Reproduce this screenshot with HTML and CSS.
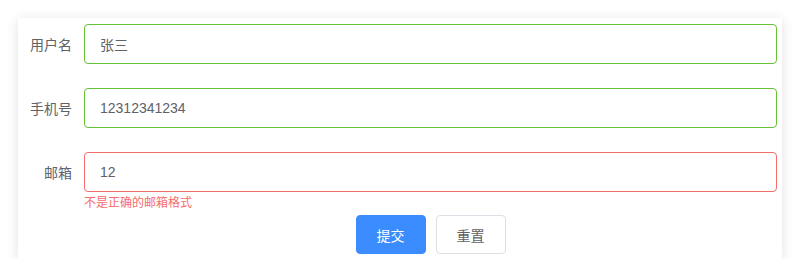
FILE: index.html
```html
<!DOCTYPE html>
<html lang="zh-CN">
<head>
    <meta charset="UTF-8">
    <meta name="viewport" content="width=device-width, initial-scale=1.0">
    <title>表单校验</title>
    <link rel="stylesheet" href="styles.css">
</head>
<body>
    <div class="card">
        <form class="form" id="user-form">
            <div class="form-item">
                <label class="form-label" for="name">用户名</label>
                <div class="form-content">
                    <input class="input is-success" type="text" id="name" value="张三">
                </div>
            </div>
            <div class="form-item">
                <label class="form-label" for="phone">手机号</label>
                <div class="form-content">
                    <input class="input is-success" type="text" id="phone" value="12312341234">
                </div>
            </div>
            <div class="form-item has-error">
                <label class="form-label" for="email">邮箱</label>
                <div class="form-content">
                    <input class="input is-error" type="text" id="email" value="12">
                    <div class="form-error">不是正确的邮箱格式</div>
                </div>
            </div>
            <div class="form-item form-actions">
                <div class="form-label"></div>
                <div class="form-content buttons">
                    <button type="submit" class="btn btn-primary">提交</button>
                    <button type="reset" class="btn">重置</button>
                </div>
            </div>
        </form>
    </div>
</body>
</html>
```

FILE: styles.css
```css
* {
    box-sizing: border-box;
    margin: 0;
    padding: 0;
}
body {
    font-family: 'Noto Sans CJK SC', 'Liberation Sans', sans-serif;
    background-color: #fff;
    color: #606266;
    padding: 18px 18px 0 18px;
}
.card {
    background-color: #fff;
    box-shadow: 0 2px 12px 0 rgba(0, 0, 0, 0.12);
    padding: 6px 5px 5px 6px;
}
.form-item {
    display: flex;
    margin-bottom: 24px;
}
.form-item.has-error {
    margin-bottom: 7px;
}
.form-item.form-actions {
    margin-bottom: 0;
}
.form-label {
    width: 60px;
    flex-shrink: 0;
    padding-right: 12px;
    text-align: right;
    font-size: 14px;
    line-height: 40px;
    color: #606266;
}
.form-content {
    flex: 1;
}
.input {
    display: block;
    width: 100%;
    height: 40px;
    padding: 0 15px;
    border: 1px solid #dcdfe6;
    border-radius: 4px;
    font-family: 'Liberation Sans', 'Noto Sans CJK SC', sans-serif;
    font-size: 14px;
    color: #606266;
    outline: none;
}
.input.is-success {
    border-color: #67c23a;
}
.input.is-error {
    border-color: #f56c6c;
}
.form-error {
    padding-top: 4px;
    font-size: 12px;
    line-height: 12px;
    color: #f56c6c;
}
.buttons {
    display: flex;
    justify-content: center;
    gap: 10px;
}
.btn {
    height: 39px;
    padding: 0 20px;
    border: 1px solid #dcdfe6;
    border-radius: 4px;
    background-color: #fff;
    font-family: 'Noto Sans CJK SC', sans-serif;
    font-size: 14px;
    color: #606266;
    cursor: pointer;
}
.btn-primary {
    background-color: #3a8cff;
    border-color: #3a8cff;
    color: #fff;
}
```
